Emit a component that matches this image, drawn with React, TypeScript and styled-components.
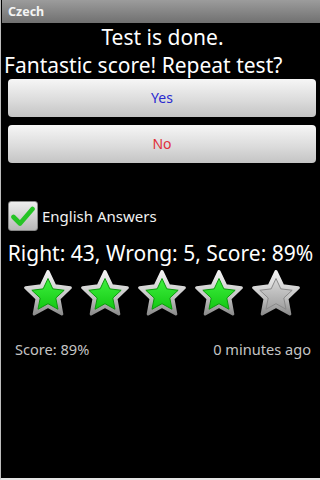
import React from 'react';
import styled, { createGlobalStyle } from 'styled-components';

const GlobalStyle = createGlobalStyle`
  html, body {
    margin: 0;
    padding: 0;
    background: #000;
  }
  * {
    box-sizing: border-box;
  }
`;

const font = '"Noto Sans", "Open Sans", "DejaVu Sans", sans-serif';

function starPoints(cx: number, cy: number, outer: number, inner: number) {
  const pts: string[] = [];
  for (let i = 0; i < 10; i++) {
    const angle = ((-90 + i * 36) * Math.PI) / 180;
    const r = i % 2 === 0 ? outer : inner;
    pts.push(`${(cx + r * Math.cos(angle)).toFixed(2)},${(cy + r * Math.sin(angle)).toFixed(2)}`);
  }
  return pts.join(' ');
}

const Star: React.FC<{ filled: boolean; id: string }> = ({ filled, id }) => (
  <svg width="52" height="46" viewBox="0 0 52 46">
    <defs>
      <linearGradient id={`rim-${id}`} x1="0" y1="0" x2="0" y2="1">
        <stop offset="0" stopColor="#f4f4f4" />
        <stop offset="0.6" stopColor="#c4c4c4" />
        <stop offset="1" stopColor="#8c8c8c" />
      </linearGradient>
      <linearGradient id={`core-${id}`} x1="0" y1="0" x2="0" y2="1">
        {filled ? (
          <>
            <stop offset="0" stopColor="#3ef03e" />
            <stop offset="1" stopColor="#14c814" />
          </>
        ) : (
          <>
            <stop offset="0" stopColor="#d8d8d8" />
            <stop offset="1" stopColor="#a0a0a0" />
          </>
        )}
      </linearGradient>
    </defs>
    <polygon
      points={starPoints(26, 25, 23.5, 11.5)}
      fill={`url(#rim-${id})`}
      stroke={`url(#rim-${id})`}
      strokeWidth="3"
      strokeLinejoin="round"
    />
    <polygon
      points={starPoints(26, 25.5, 17, 8.2)}
      fill={`url(#core-${id})`}
      stroke={filled ? '#0c9a0c' : '#8a8a8a'}
      strokeWidth="1"
      strokeLinejoin="round"
    />
  </svg>
);

const CheckMark = () => (
  <svg width="24" height="22" viewBox="0 0 24 22">
    <path
      d="M2.5 12 L9 18.5 L21.5 4"
      fill="none"
      stroke="#26c426"
      strokeWidth="4.6"
      strokeLinecap="round"
      strokeLinejoin="round"
    />
  </svg>
);

export default function App() {
  const stars = [true, true, true, true, false];
  return (
    <Screen>
      <GlobalStyle />
      <TitleBar>Czech</TitleBar>
      <Heading>Test is done.</Heading>
      <Question>Fantastic score! Repeat test?</Question>
      <Buttons>
        <Button tone="#2a2ad0">Yes</Button>
        <Button tone="#e0303a">No</Button>
      </Buttons>
      <CheckRow>
        <CheckBox>
          <CheckMark />
        </CheckBox>
        <CheckLabel>English Answers</CheckLabel>
      </CheckRow>
      <ScoreLine>Right: 43, Wrong: 5, Score: 89%</ScoreLine>
      <Stars>
        {stars.map((filled, i) => (
          <Star key={i} id={`s${i}`} filled={filled} />
        ))}
      </Stars>
      <Footer>
        <span>Score: 89%</span>
        <span>0 minutes ago</span>
      </Footer>
    </Screen>
  );
}

const Screen = styled.div({
  width: 320,
  height: 480,
  background: '#000',
  borderLeft: '1px solid #bdbdbd',
  borderBottom: '2px solid #e4e4e4',
  display: 'flex',
  flexDirection: 'column',
  fontFamily: font,
  color: '#fff',
  overflow: 'hidden',
});

const TitleBar = styled.div({
  height: 23,
  background: 'linear-gradient(#9c9c9c, #707070)',
  color: '#f4f4f4',
  fontWeight: 'bold',
  fontSize: '12.5px',
  lineHeight: '23px',
  paddingLeft: 6,
  marginLeft: 1,
});

const Heading = styled.div({
  textAlign: 'center',
  fontSize: '21px',
  lineHeight: '28px',
  paddingLeft: 4,
});

const Question = styled.div({
  fontSize: '21px',
  lineHeight: '28px',
  paddingLeft: 3,
  whiteSpace: 'nowrap',
});

const Buttons = styled.div({
  display: 'flex',
  flexDirection: 'column',
  gap: 8,
  margin: '0 4px 0 7px',
});

const Button = styled.div<{ tone: string }>(({ tone }) => ({
  height: 38,
  borderRadius: 4,
  background: 'linear-gradient(#f6f6f6, #dcdcdc 55%, #c4c4c4)',
  color: tone,
  fontSize: '14px',
  lineHeight: '38px',
  textAlign: 'center',
}));

const CheckRow = styled.div({
  display: 'flex',
  alignItems: 'center',
  marginTop: 38,
  marginLeft: 7,
  height: 30,
});

const CheckBox = styled.div({
  width: 30,
  height: 30,
  borderRadius: 3,
  background: 'linear-gradient(#eeeeee, #b8b8b8)',
  border: '1px solid #888',
  display: 'flex',
  alignItems: 'center',
  justifyContent: 'center',
});

const CheckLabel = styled.div({
  marginLeft: 4,
  fontSize: '15px',
  color: '#f2f2f2',
});

const ScoreLine = styled.div({
  marginTop: 8,
  textAlign: 'center',
  fontSize: '21px',
  lineHeight: '28px',
  whiteSpace: 'nowrap',
});

const Stars = styled.div({
  marginTop: 3,
  display: 'flex',
  justifyContent: 'center',
  gap: 5,
  paddingLeft: 2,
});

const Footer = styled.div({
  marginTop: 23,
  display: 'flex',
  justifyContent: 'space-between',
  padding: '0 9px 0 14px',
  fontSize: '14.6px',
  lineHeight: '20px',
  color: '#c4c4c4',
});
